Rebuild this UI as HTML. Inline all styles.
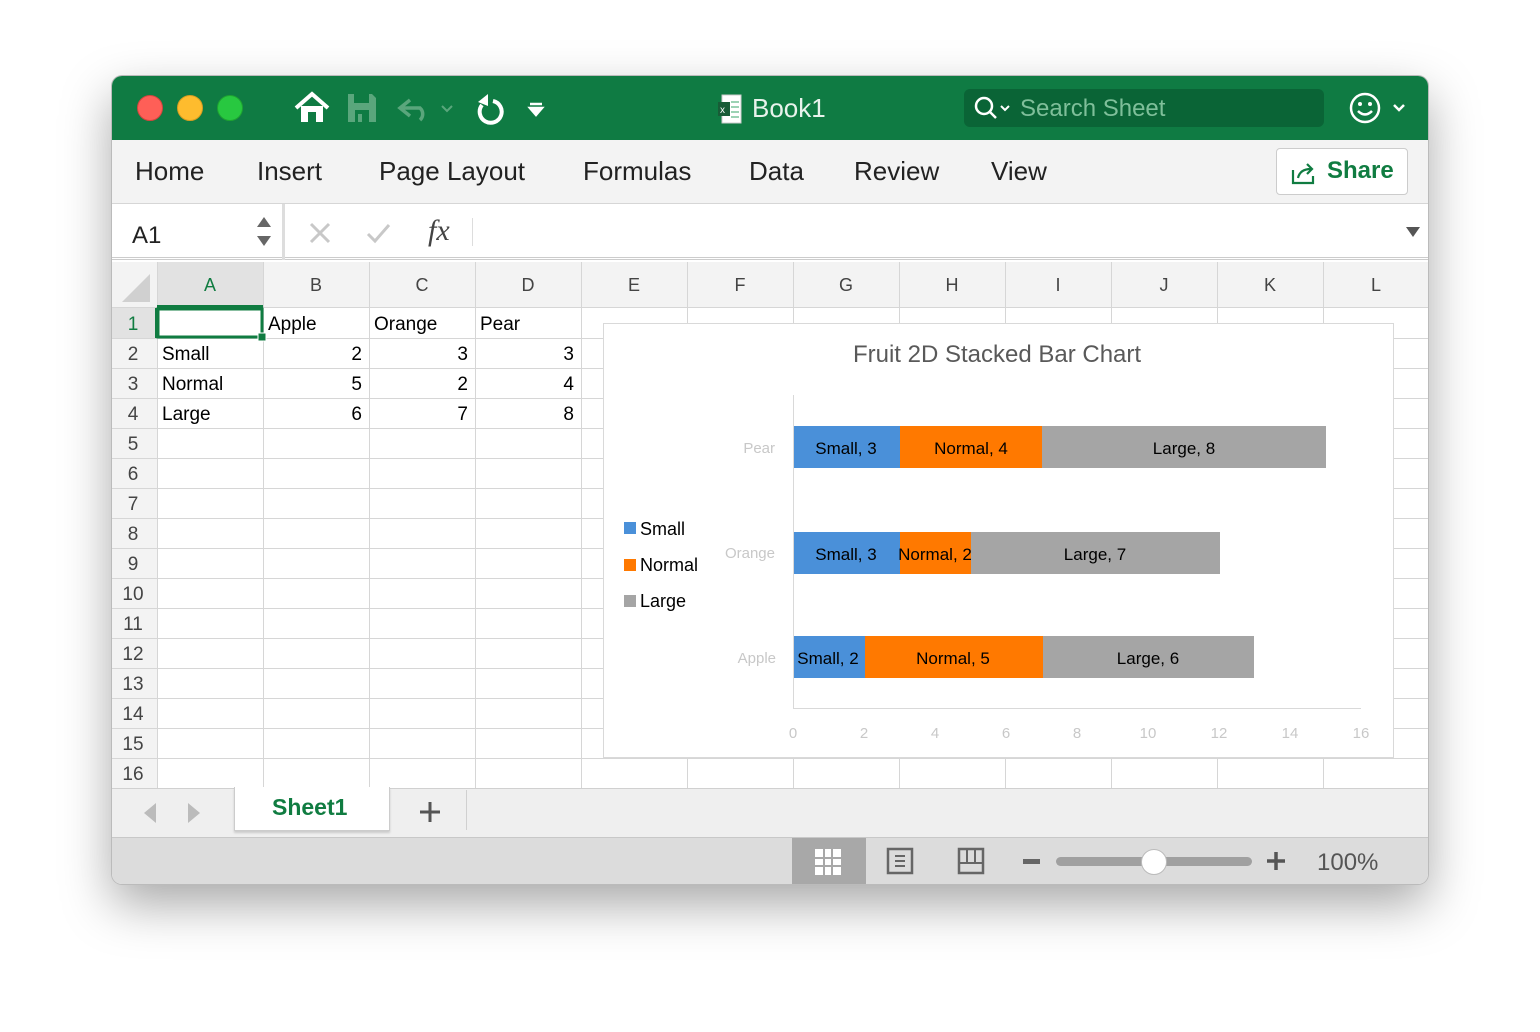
<!DOCTYPE html>
<html><head><style>
*{margin:0;padding:0;box-sizing:border-box}
body{width:1540px;height:1032px;background:#fff;font-family:"Liberation Sans",sans-serif;position:relative;overflow:hidden}
.a{position:absolute}
#win{left:112px;top:76px;width:1316px;height:808px;border-radius:10px;overflow:hidden;box-shadow:0 0 0 1px #bbb,0 20px 50px rgba(0,0,0,.35);background:#fff}
.t{position:absolute;color:#222;font-size:26px}
</style></head><body>
<div id="win" class="a">
<div class="a" style="left:0;top:0;width:1316px;height:64px;background:#0f7b43"></div>
<div class="a" style="left:25px;top:19px;width:26px;height:26px;border-radius:50%;background:#fe5f57;border:1px solid #d5443e"></div>
<div class="a" style="left:65px;top:19px;width:26px;height:26px;border-radius:50%;background:#febc2e;border:1px solid #d99d20"></div>
<div class="a" style="left:105px;top:19px;width:26px;height:26px;border-radius:50%;background:#28c840;border:1px solid #1ea331"></div>
<svg class="a" style="left:180px;top:14px" width="260" height="36" viewBox="0 0 260 36">
<path d="M4 18 L20 4 L36 18" fill="none" stroke="#fff" stroke-width="4"/><path d="M9 16 V32 H16 V22 H24 V32 H31 V16 Z" fill="#fff"/>
<path d="M56 4 H80 L84 8 V32 H56 Z" fill="#5aa67c"/><rect x="62" y="4" width="15" height="9" fill="#0f7b43"/><rect x="63" y="20" width="14" height="12" fill="#0f7b43"/><rect x="66" y="24" width="4" height="8" fill="#5aa67c"/>
<path d="M118 10 L108 18 L118 26 M108 18 H128 A8 8 0 0 1 128 30" fill="none" stroke="#5aa67c" stroke-width="3.5"/>
<path d="M150 16 l5 5 5-5" fill="none" stroke="#5aa67c" stroke-width="2"/>
<path d="M201 11 A11 11 0 1 1 190 15" fill="none" stroke="#fff" stroke-width="4"/><path d="M196 4 L196 16 L186 12 Z" fill="#fff"/>
<path d="M238 14 h12 M238 18 l6 7 6-7z" stroke="#fff" stroke-width="2.5" fill="#fff"/>
</svg>
<svg class="a" style="left:605px;top:18px" width="26" height="30"><rect x="5" y="1" width="19" height="28" fill="#fff" stroke="#ccc"/><rect x="1" y="8" width="12" height="14" fill="#185c37"/><text x="3" y="19" font-size="10" fill="#fff" font-family="Liberation Sans">x</text><g stroke="#3aa66a"><path d="M14 8h8M14 13h8M14 18h8M14 23h8"/></g></svg>
<div class="t" style="left:640px;top:17px;color:#e8f3ec;font-size:26px">Book1</div>
<div class="a" style="left:852px;top:13px;width:360px;height:38px;background:#0a6436;border-radius:6px"></div>
<svg class="a" style="left:862px;top:20px" width="40" height="26"><circle cx="10" cy="10" r="8" fill="none" stroke="#fff" stroke-width="2.5"/><path d="M16 16l6 6" stroke="#fff" stroke-width="2.5"/><path d="M27 10l4 4 4-4" fill="none" stroke="#fff" stroke-width="2"/></svg>
<div class="t" style="left:908px;top:19px;color:#7fbf9a;font-size:24px">Search Sheet</div>
<svg class="a" style="left:1236px;top:15px" width="60" height="34"><circle cx="17" cy="17" r="14" fill="none" stroke="#fff" stroke-width="2.5"/><circle cx="12" cy="13" r="2" fill="#fff"/><circle cx="22" cy="13" r="2" fill="#fff"/><path d="M10 20q7 7 14 0" fill="none" stroke="#fff" stroke-width="2.5"/><path d="M46 14l5 5 5-5" fill="none" stroke="#fff" stroke-width="2.5"/></svg>
<div class="a" style="left:0;top:64px;width:1316px;height:64px;background:#f3f3f3;border-bottom:1px solid #d6d6d6"></div>
<div class="t" style="left:23px;top:80px">Home</div>
<div class="t" style="left:145px;top:80px">Insert</div>
<div class="t" style="left:267px;top:80px">Page Layout</div>
<div class="t" style="left:471px;top:80px">Formulas</div>
<div class="t" style="left:637px;top:80px">Data</div>
<div class="t" style="left:742px;top:80px">Review</div>
<div class="t" style="left:879px;top:80px">View</div>
<div class="a" style="left:1164px;top:72px;width:132px;height:47px;background:#fff;border:1px solid #ccc;border-radius:4px"></div>
<svg class="a" style="left:1178px;top:84px" width="28" height="26"><path d="M3 10v13h20v-7" fill="none" stroke="#107c41" stroke-width="2.2"/><path d="M8 18q2-9 13-9M17 4l5 5-5 5" fill="none" stroke="#107c41" stroke-width="2.2"/></svg>
<div class="t" style="left:1215px;top:81px;color:#107c41;font-weight:bold;font-size:24px">Share</div>
<div class="a" style="left:0;top:128px;width:1316px;height:56px;background:#fff;border-bottom:3px double #ccc"></div>
<div class="a" style="left:170px;top:128px;width:3px;height:56px;background:#ddd"></div>
<div class="t" style="left:20px;top:146px;font-size:24px">A1</div>
<svg class="a" style="left:144px;top:138px" width="16" height="36"><path d="M1 13l7-10 7 10z" fill="#666"/><path d="M1 22l7 10 7-10z" fill="#666"/></svg>
<svg class="a" style="left:196px;top:144px" width="100" height="28"><path d="M3 4l18 18M21 4l-18 18" stroke="#c8c8c8" stroke-width="3"/><path d="M60 14l7 7 14-16" fill="none" stroke="#c8c8c8" stroke-width="3"/></svg>
<div class="t" style="left:316px;top:138px;font-family:'Liberation Serif',serif;font-style:italic;font-size:30px;color:#444">fx</div>
<div class="a" style="left:360px;top:142px;width:1px;height:28px;background:#ddd"></div>
<svg class="a" style="left:1293px;top:150px" width="16" height="12"><path d="M1 1h14l-7 10z" fill="#555"/></svg>
<svg class="a" style="left:0;top:186px" width="1316" height="526">
<rect x="0" y="0" width="1316" height="46" fill="#f3f3f3"/>
<rect x="0" y="46" width="45" height="480" fill="#f3f3f3"/>
<rect x="45" y="0" width="106" height="46" fill="#e2e2e2"/>
<rect x="0" y="46" width="45" height="30" fill="#e2e2e2"/>
<path d="M10 40 L38 40 L38 12 Z" fill="#d0d0d0"/>
<g stroke="#d6d6d6" stroke-width="1">
<path d="M45.5 0v526M151.5 0v526M257.5 0v526M363.5 0v526M469.5 0v526M575.5 0v526M681.5 0v526M787.5 0v526M893.5 0v526M999.5 0v526M1105.5 0v526M1211.5 0v526"/>
<path d="M0 45.5h1316M0 76.5h1316M0 106.5h1316M0 136.5h1316M0 166.5h1316M0 196.5h1316M0 226.5h1316M0 256.5h1316M0 286.5h1316M0 316.5h1316M0 346.5h1316M0 376.5h1316M0 406.5h1316M0 436.5h1316M0 466.5h1316M0 496.5h1316"/>
</g>
<path d="M45 44.5h106M44.5 46v30" stroke="#107c41" stroke-width="3"/>
<rect x="46" y="47" width="104" height="28" fill="none" stroke="#107c41" stroke-width="3"/>
<rect x="146" y="71" width="8" height="8" fill="#107c41" stroke="#fff"/>
<g font-family="Liberation Sans" font-size="18" fill="#444" text-anchor="middle">
<text x="98" y="29" fill="#107c41">A</text><text x="204" y="29">B</text><text x="310" y="29">C</text><text x="416" y="29">D</text><text x="522" y="29">E</text><text x="628" y="29">F</text><text x="734" y="29">G</text><text x="840" y="29">H</text><text x="946" y="29">I</text><text x="1052" y="29">J</text><text x="1158" y="29">K</text><text x="1264" y="29">L</text>
</g>
<g font-family="Liberation Sans" font-size="19" fill="#444" text-anchor="middle">
<text x="21" y="68" fill="#107c41">1</text><text x="21" y="98">2</text><text x="21" y="128">3</text><text x="21" y="158">4</text><text x="21" y="188">5</text><text x="21" y="218">6</text><text x="21" y="248">7</text><text x="21" y="278">8</text><text x="21" y="308">9</text><text x="21" y="338">10</text><text x="21" y="368">11</text><text x="21" y="398">12</text><text x="21" y="428">13</text><text x="21" y="458">14</text><text x="21" y="488">15</text><text x="21" y="518">16</text>
</g>
<g font-family="Liberation Sans" font-size="19" fill="#000">
<text x="156" y="68">Apple</text><text x="262" y="68">Orange</text><text x="368" y="68">Pear</text>
<text x="50" y="98">Small</text><text x="50" y="128">Normal</text><text x="50" y="158">Large</text>
<g text-anchor="end"><text x="250" y="98">2</text><text x="356" y="98">3</text><text x="462" y="98">3</text>
<text x="250" y="128">5</text><text x="356" y="128">2</text><text x="462" y="128">4</text>
<text x="250" y="158">6</text><text x="356" y="158">7</text><text x="462" y="158">8</text></g>
</g>
</svg>
<svg class="a" style="left:491px;top:247px" width="791" height="435" font-family="Liberation Sans">
<rect x="0.5" y="0.5" width="790" height="434" fill="#fff" stroke="#d9d9d9"/>
<text x="394" y="39" font-size="24" fill="#595959" text-anchor="middle">Fruit 2D Stacked Bar Chart</text>
<path d="M190.5 72v313M190 385.5h568" stroke="#d9d9d9"/>
<rect x="191" y="103" width="106" height="42" fill="#4a90d9"/><rect x="297" y="103" width="142" height="42" fill="#ff7900"/><rect x="439" y="103" width="284" height="42" fill="#a5a5a5"/>
<rect x="191" y="209" width="106" height="42" fill="#4a90d9"/><rect x="297" y="209" width="71" height="42" fill="#ff7900"/><rect x="368" y="209" width="249" height="42" fill="#a5a5a5"/>
<rect x="191" y="313" width="71" height="42" fill="#4a90d9"/><rect x="262" y="313" width="178" height="42" fill="#ff7900"/><rect x="440" y="313" width="211" height="42" fill="#a5a5a5"/>
<g font-size="17" fill="#000" text-anchor="middle">
<text x="243" y="131">Small, 3</text><text x="368" y="131">Normal, 4</text><text x="581" y="131">Large, 8</text>
<text x="243" y="237">Small, 3</text><text x="332" y="237">Normal, 2</text><text x="492" y="237">Large, 7</text>
<text x="225" y="341">Small, 2</text><text x="350" y="341">Normal, 5</text><text x="545" y="341">Large, 6</text>
</g>
<g font-size="15" fill="#c8c8c8" text-anchor="end"><text x="172" y="130">Pear</text><text x="172" y="235">Orange</text><text x="173" y="340">Apple</text></g>
<g font-size="15" fill="#c8c8c8" text-anchor="middle"><text x="190" y="415">0</text><text x="261" y="415">2</text><text x="332" y="415">4</text><text x="403" y="415">6</text><text x="474" y="415">8</text><text x="545" y="415">10</text><text x="616" y="415">12</text><text x="687" y="415">14</text><text x="758" y="415">16</text></g>
<rect x="21" y="199" width="12" height="12" fill="#4a90d9"/><rect x="21" y="236" width="12" height="12" fill="#ff7900"/><rect x="21" y="272" width="12" height="12" fill="#a5a5a5"/>
<g font-size="18" fill="#000"><text x="37" y="212">Small</text><text x="37" y="248">Normal</text><text x="37" y="284">Large</text></g>
</svg>
<div class="a" style="left:0;top:712px;width:1316px;height:50px;background:#efefef;border-top:1px solid #d0d0d0;border-bottom:1px solid #c8c8c8"></div>
<svg class="a" style="left:28px;top:724px" width="70" height="26"><path d="M16 3l-12 10 12 10z" fill="#bbb"/><path d="M48 3l12 10-12 10z" fill="#bbb"/></svg>
<div class="a" style="left:122px;top:711px;width:156px;height:44px;background:#fff;border:1px solid #ccc;border-top:none;box-shadow:0 2px 2px rgba(0,0,0,.15)"></div>
<div class="t" style="left:160px;top:718px;color:#107c41;font-weight:bold;font-size:23px">Sheet1</div>
<svg class="a" style="left:306px;top:724px" width="24" height="24"><path d="M12 2v20M2 12h20" stroke="#555" stroke-width="3"/></svg>
<div class="a" style="left:354px;top:714px;width:1px;height:40px;background:#d0d0d0"></div>
<div class="a" style="left:0;top:762px;width:1316px;height:46px;background:#dcdcdc"></div>
<div class="a" style="left:680px;top:762px;width:74px;height:46px;background:#a8a8a8"></div>
<svg class="a" style="left:702px;top:772px" width="30" height="28"><rect x="1" y="1" width="26" height="26" fill="#fff"/><g stroke="#a8a8a8" stroke-width="2"><path d="M10 0v28M18 0v28M0 10h28M0 18h28"/></g></svg>
<svg class="a" style="left:774px;top:771px" width="30" height="30"><rect x="2" y="2" width="24" height="24" fill="none" stroke="#666" stroke-width="2.5"/><path d="M9 9h10M9 14h10M9 19h10" stroke="#666" stroke-width="2"/></svg>
<svg class="a" style="left:845px;top:771px" width="30" height="30"><rect x="2" y="2" width="24" height="24" fill="none" stroke="#666" stroke-width="2.5"/><path d="M2 16h24M10 2v14M18 2v14" stroke="#666" stroke-width="2"/></svg>
<div class="a" style="left:911px;top:783px;width:17px;height:5px;background:#666"></div>
<div class="a" style="left:944px;top:781px;width:196px;height:9px;background:#a0a0a0;border-radius:5px"></div>
<div class="a" style="left:1029px;top:773px;width:26px;height:26px;border-radius:50%;background:#fff;border:1px solid #bbb"></div>
<svg class="a" style="left:1154px;top:775px" width="20" height="20"><path d="M10 1v18M1 10h18" stroke="#555" stroke-width="3.5"/></svg>
<div class="t" style="left:1205px;top:773px;color:#555;font-size:24px">100%</div>
</div>
</body></html>
